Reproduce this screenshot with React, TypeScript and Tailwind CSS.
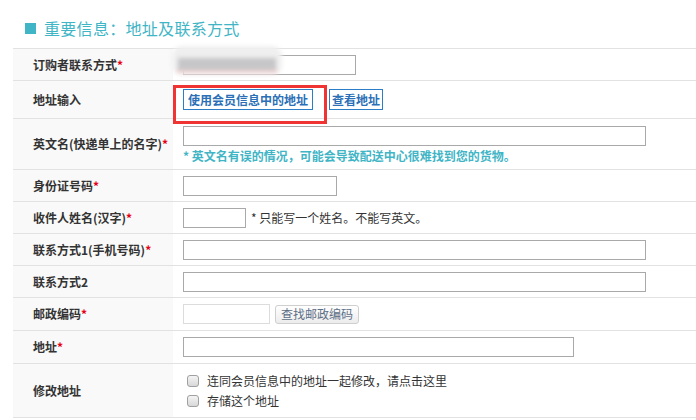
import React from 'react';

const font = { fontFamily: '"Noto Sans CJK SC", "Noto Sans", sans-serif' };

interface RowProps {
  label: string;
  required?: boolean;
  height: string;
  children?: React.ReactNode;
}

const Row: React.FC<RowProps> = ({ label, required, height, children }) => (
  <div className={`flex border-b border-[#e2e2e2] ${height}`}>
    <div className="w-[160px] shrink-0 bg-[#f9f9f9] flex items-center pl-[20px] text-[12px] font-bold text-[#333]">
      {label}
      {required && <span className="text-[#e60012]">*</span>}
    </div>
    <div className="flex-1 flex flex-col justify-center pl-[10px] relative">{children}</div>
  </div>
);

const TextInput: React.FC<{ width: string; light?: boolean }> = ({ width, light }) => (
  <input
    type="text"
    className={`${width} h-[20px] border bg-white outline-none ${light ? 'border-[#dcdcdc]' : 'border-[#a9a9a9]'}`}
  />
);

const Check: React.FC<{ label: string }> = ({ label }) => (
  <label className="flex items-center gap-[8px] h-[20px] pl-[4px] text-[12px] text-[#333]">
    <span className="w-[12px] h-[12px] rounded-[3px] border border-[#a0a0a0] bg-gradient-to-b from-[#f4f4f4] to-[#d8d8d8]" />
    {label}
  </label>
);

export default function App() {
  return (
    <div className="w-[696px] h-[420px] bg-white overflow-hidden" style={font}>
      {/* 标题 */}
      <div className="h-[48px] flex items-center pl-[25px] pt-[8px] gap-[8px]">
        <span className="w-[11px] h-[11px] bg-[#3fb5c6]" />
        <span className="text-[16px] text-[#3fb5c6] leading-none tracking-[0.3px]">重要信息：地址及联系方式</span>
      </div>

      <div className="ml-[13px] border-t border-[#e2e2e2]">
        <Row label="订购者联系方式" required height="h-[32px]">
          <TextInput width="w-[173px]" />
          {/* 打码区域 */}
          <div className="absolute left-[-1px] top-[-3px] w-[110px] h-[29px] rounded-[10px] bg-[#efefef] blur-[2px]">
            <div className="mt-[12px] mx-[6px] h-[12px] bg-[#c6c6c8]" />
            <div className="mx-[4px] h-[3px] bg-[#f3d4d4]" />
          </div>
        </Row>

        <Row label="地址输入" height="h-[38px]">
          <div className="flex items-center gap-[16px]">
            <button className="h-[21px] px-[4px] border border-[#2b7dc6] text-[12px] font-bold text-[#2b6fb6] leading-none">
              使用会员信息中的地址
            </button>
            <button className="h-[21px] px-[2px] border border-[#2b7dc6] text-[12px] font-bold text-[#2b6fb6] leading-none">
              查看地址
            </button>
          </div>
          <div className="absolute left-0 top-[4px] w-[154px] h-[39px] border-[3px] border-[#f03434] z-10" />
        </Row>

        <Row label="英文名(快递单上的名字)" required height="h-[51px]">
          <TextInput width="w-[463px]" />
          <p className="mt-[3px] text-[12px] font-bold text-[#3fb5c6] leading-[14px]">
            * 英文名有误的情况，可能会导致配送中心很难找到您的货物。
          </p>
        </Row>

        <Row label="身份证号码" required height="h-[32px]">
          <TextInput width="w-[154px]" />
        </Row>

        <Row label="收件人姓名(汉字)" required height="h-[32px]">
          <div className="flex items-center gap-[5px]">
            <TextInput width="w-[63px]" />
            <span className="text-[12px] text-[#333]">* 只能写一个姓名。不能写英文。</span>
          </div>
        </Row>

        <Row label="联系方式1(手机号码)" required height="h-[32px]">
          <TextInput width="w-[463px]" />
        </Row>

        <Row label="联系方式2" height="h-[32px]">
          <TextInput width="w-[463px]" />
        </Row>

        <Row label="邮政编码" required height="h-[33px]">
          <div className="flex items-center gap-[5px]">
            <TextInput width="w-[87px]" light />
            <button className="h-[19px] px-[5px] rounded-[3px] border border-[#cfcfcf] bg-gradient-to-b from-white to-[#ececec] text-[12px] text-[#5d6f86] leading-none">
              查找邮政编码
            </button>
          </div>
        </Row>

        <Row label="地址" required height="h-[33px]">
          <TextInput width="w-[391px]" />
        </Row>

        <Row label="修改地址" height="h-[54px]">
          <Check label="连同会员信息中的地址一起修改，请点击这里" />
          <Check label="存储这个地址" />
        </Row>
      </div>
    </div>
  );
}
